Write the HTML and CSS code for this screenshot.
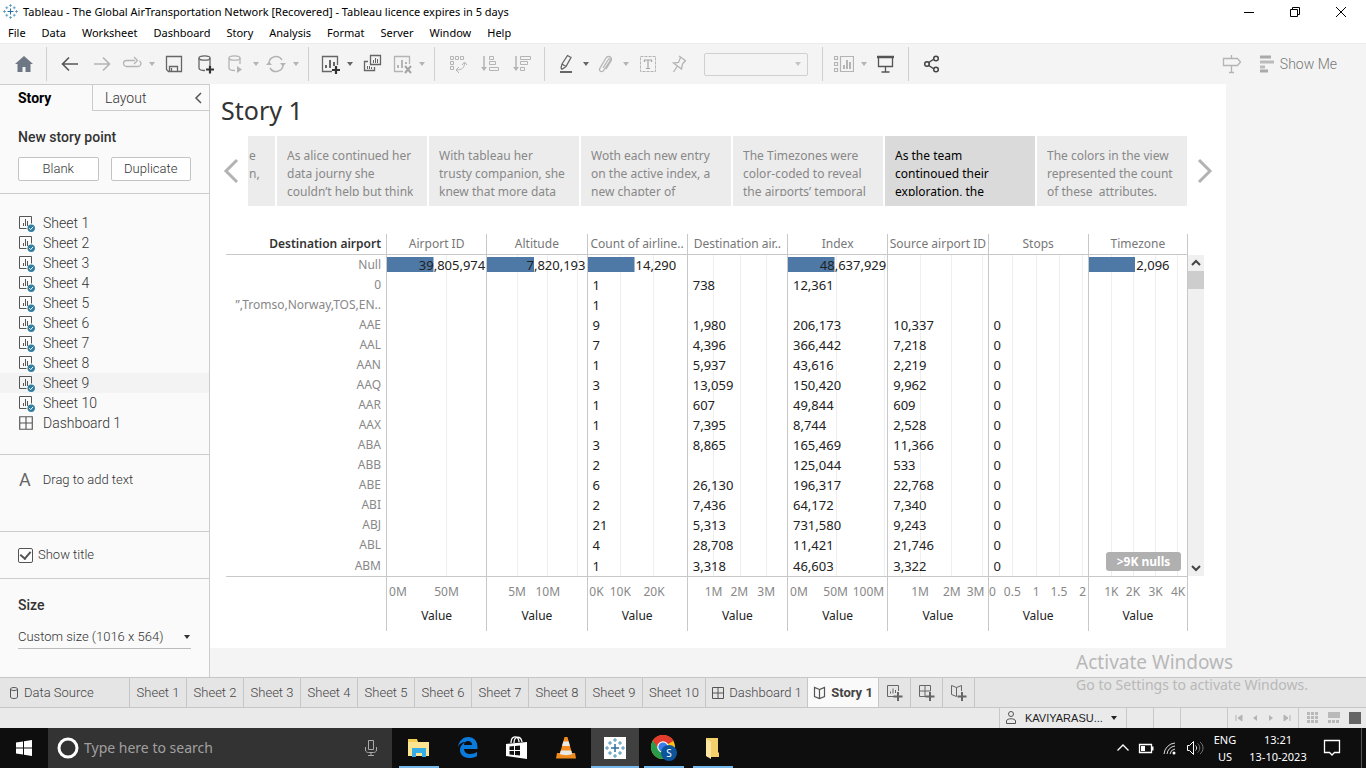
FILE: index.html
```html
<!DOCTYPE html>
<html lang="en">
<head>
<meta charset="utf-8">
<title>Tableau - The Global AirTransportation Network</title>
<link rel="stylesheet" href="styles.css">
</head>
<body>
<svg class="symbols" aria-hidden="true">
  <symbol id="caret" viewBox="0 0 8 5"><path d="M1 0h6L4 4z" fill="currentColor"/></symbol>
  <symbol id="sheet" viewBox="0 0 18 18"><path d="M9.500 14.500H2.500V2.500h12v7" fill="none" stroke="#555"/><path d="M6.500 12V9M8.500 12V5M10.500 12V7" stroke="#555"/><circle cx="14.200" cy="14.200" r="3.700" fill="#2f7d9f"/><path d="M12.300 14.200l1.400 1.400 2.400-2.800" fill="none" stroke="#fff"/></symbol>
  <symbol id="dash" viewBox="0 0 14 14"><path d="M1.500 1.500h11v11h-11zM7 1.500v11M1.500 7h11" fill="none" stroke="#555"/></symbol>
  <symbol id="book" viewBox="0 0 14 14"><path d="M6.500 3.500L1.500 1.500v9l5 2 5-2v-9zv9" fill="none" stroke="#555" stroke-width="1.200"/></symbol>
  <symbol id="logo" viewBox="0 0 20 20"><path d="M10 6v8M6 10h8" stroke="#2c6f9f" stroke-width="1.500"/><path d="M10 0v4M8 2h4M10 16v4M8 18h4M0 10h4M2 8v4M16 10h4M18 8v4M5 3v4M3 5h4M15 3v4M13 5h4M5 13v4M3 15h4M15 13v4M13 15h4" stroke="#4c91b8"/></symbol>
</svg>

<header>
  <div class="titlebar">
    <svg class="app-logo" viewBox="0 0 20 20"><use href="#logo"/></svg>
    <span class="title">Tableau - The Global AirTransportation Network [Recovered] - Tableau licence expires in 5 days</span>
    <div class="window-buttons">
      <button aria-label="Minimise"><svg width="12" height="12"><path d="M1 6.500h10" stroke="#000"/></svg></button>
      <button aria-label="Restore"><svg width="12" height="12"><path d="M1.500 3.500h7v7h-7zM3.500 3.500v-2h7v7h-2" fill="none" stroke="#000"/></svg></button>
      <button aria-label="Close"><svg width="12" height="12"><path d="M1 1l10 10M11 1L1 11" stroke="#000"/></svg></button>
    </div>
  </div>
  <nav class="menubar">
    <button>File</button><button>Data</button><button>Worksheet</button><button>Dashboard</button><button>Story</button><button>Analysis</button><button>Format</button><button>Server</button><button>Window</button><button>Help</button>
  </nav>
</header>

<div class="toolbar" role="toolbar">
  <button class="tool" aria-label="Start page"><svg width="20" height="20"><path d="M10 2l9 8h-2.500v8h-5v-5h-3v5h-5v-8H1z" fill="#6d7884"/></svg></button>
  <i class="sep"></i>
  <button class="tool" aria-label="Undo"><svg width="20" height="20"><path d="M18 10H2.500M9 3.500L2.500 10 9 16.500" fill="none" stroke="#555" stroke-width="1.600"/></svg></button>
  <button class="tool off" aria-label="Redo"><svg width="20" height="20"><path d="M2 10h15.500M11 3.500l6.500 6.500-6.500 6.500" fill="none" stroke="#b4b4b4" stroke-width="1.600"/></svg></button>
  <button class="tool drop off" aria-label="Replay"><svg width="20" height="20"><path d="M13 6.500H4.500a3 3 0 0 0 0 6h11a3 3 0 0 0 2-5.500M12 3l3.500 3.500L12 10" fill="none" stroke="#b4b4b4" stroke-width="1.300"/></svg><svg class="caret"><use href="#caret"/></svg></button>
  <button class="tool" aria-label="Save"><svg width="20" height="20"><path d="M2.500 2.500h15v15h-13l-2-2zM5.500 17v-4.500h8V17M7.500 14v3" fill="none" stroke="#666" stroke-width="1.300"/></svg></button>
  <button class="tool" aria-label="New data source"><svg width="20" height="20"><path d="M9 16.500c-3 0-6-.8-6-2.500V4M14 4v7" fill="none" stroke="#666" stroke-width="1.300"/><ellipse cx="8.500" cy="4" rx="5.500" ry="2.200" fill="none" stroke="#666" stroke-width="1.300"/><path d="M14 11.500v8M10 15.500h8" stroke="#333" stroke-width="2.200"/></svg></button>
  <button class="tool drop off" aria-label="Pause updates"><svg width="20" height="20"><path d="M9 16.500c-3 0-6-.8-6-2.500V4M14 4v6" fill="none" stroke="#b4b4b4" stroke-width="1.300"/><ellipse cx="8.500" cy="4" rx="5.500" ry="2.200" fill="none" stroke="#b4b4b4" stroke-width="1.300"/><path d="M11 12l5 3.500-5 3.500z" fill="#b4b4b4"/></svg><svg class="caret"><use href="#caret"/></svg></button>
  <button class="tool drop off" aria-label="Refresh"><svg width="20" height="20"><path d="M3 9a7 7 0 0 1 13-3M17 11a7 7 0 0 1-13 3" fill="none" stroke="#b4b4b4" stroke-width="1.500"/><path d="M0 11h6L3 7.500zM14 9h6l-3 3.500z" fill="#b4b4b4"/></svg><svg class="caret"><use href="#caret"/></svg></button>
  <i class="sep"></i>
  <button class="tool drop" aria-label="New worksheet"><svg width="20" height="20"><path d="M12 17.500H2.500v-15h15V11" fill="none" stroke="#666" stroke-width="1.300"/><path d="M6 14v-3M10 14V6M14 12V8" stroke="#666" stroke-width="2"/><path d="M16 12v8M12 16h8" stroke="#333" stroke-width="2.200"/></svg><svg class="caret"><use href="#caret"/></svg></button>
  <button class="tool" aria-label="Duplicate"><svg width="20" height="20"><path d="M8.500 1.500h10v9h-10zM6 7.500H2.500v9h10V13" fill="none" stroke="#666" stroke-width="1.300"/><path d="M11.500 9V6M13.500 9V4M15.500 9V5M5.500 15v-3M7.500 15v-3M9.500 15v-2" stroke="#666"/></svg></button>
  <button class="tool drop off" aria-label="Clear sheet"><svg width="20" height="20"><path d="M11 17.500H2.500v-15h15V10" fill="none" stroke="#b4b4b4" stroke-width="1.300"/><path d="M6 14v-3M10 14V6M14 10V8" stroke="#b4b4b4" stroke-width="2"/><path d="M13 12l6 7M19 12l-6 7" stroke="#a4a4a4" stroke-width="2"/></svg><svg class="caret"><use href="#caret"/></svg></button>
  <i class="sep"></i>
  <button class="tool off" aria-label="Swap"><svg width="20" height="20"><path d="M2.500 2.500h3v3h-3zM7.500 2.500h3v3h-3zM12.500 2.500h3v3h-3zM2.500 7.500h3v3h-3zM2.500 12.500h3v3h-3zM16.500 9c0 5-3 7-8 7M14 11l2.500-3 2.500 3M11 13l-3 3 3 3" fill="none" stroke="#b4b4b4"/></svg></button>
  <button class="tool off" aria-label="Sort ascending"><svg width="20" height="20"><path d="M4 2v13" stroke="#b4b4b4" stroke-width="1.500"/><path d="M1 13h6l-3 4z" fill="#b4b4b4"/><path d="M9.500 2.500h4v3h-4zM9.500 7.500h6v3h-6zM9.500 13.500h9v3h-9z" fill="none" stroke="#b4b4b4"/></svg></button>
  <button class="tool off" aria-label="Sort descending"><svg width="20" height="20"><path d="M4 2v13" stroke="#b4b4b4" stroke-width="1.500"/><path d="M1 13h6l-3 4z" fill="#b4b4b4"/><path d="M8.500 2.500h10v3h-10zM8.500 7.500h7v3h-7zM8.500 13.500h4v3h-4z" fill="none" stroke="#b4b4b4"/></svg></button>
  <i class="sep"></i>
  <button class="tool drop" aria-label="Highlight"><svg width="20" height="20"><path d="M6 10l5.500-8.500 3.500 2-5 9-3.500 2.500-1.500-1zM6 10l4 2.500M5 15h2" fill="none" stroke="#666" stroke-width="1.300"/><path d="M4 18h12" stroke="#666" stroke-width="2"/></svg><svg class="caret"><use href="#caret"/></svg></button>
  <button class="tool drop off" aria-label="Group"><svg width="20" height="20"><path d="M7 14l5-8c1-2 3-1 2 1l-6 9c-2 3-6 1-4-2l6-10c2-3 7-1 5 3l-5 8" fill="none" stroke="#b4b4b4" stroke-width="1.300"/></svg><svg class="caret"><use href="#caret"/></svg></button>
  <button class="tool off" aria-label="Mark labels"><svg width="20" height="20"><path d="M2.500 2.500h15v15h-15z" fill="none" stroke="#b4b4b4" stroke-dasharray="3 1"/><path d="M6.500 8V6h7v2M10 6v8M8 14.500h4" fill="none" stroke="#a4a4a4" stroke-width="1.200"/></svg></button>
  <button class="tool off" aria-label="Pin"><svg width="20" height="20"><path d="M9 2l7 5M10.500 3.500l-2 5-5 .5 8 6 1-5 3-3.500M7.500 12l-4 6" fill="none" stroke="#b4b4b4" stroke-width="1.300"/></svg></button>
  <div class="fit"><select aria-label="Fit" disabled><option></option></select><svg class="caret"><use href="#caret"/></svg></div>
  <i class="sep"></i>
  <button class="tool drop off" aria-label="Show cards"><svg width="20" height="20"><path d="M.5 2.500h3v3h-3zM.5 8.500h3v3h-3zM.5 14.500h3v3h-3zM6.500 2.500h13v15h-13z" fill="none" stroke="#b4b4b4" stroke-width="1.200"/><path d="M10 15v-4M13 15V6M16 15V8" stroke="#b4b4b4" stroke-width="2"/></svg><svg class="caret"><use href="#caret"/></svg></button>
  <button class="tool" aria-label="Presentation mode"><svg width="20" height="20"><path d="M1 3h17" stroke="#555" stroke-width="2.500"/><path d="M2.500 3v9.500h14V3M9.500 12v6M5.500 18h8" fill="none" stroke="#555" stroke-width="1.300"/></svg></button>
  <i class="sep"></i>
  <button class="tool" aria-label="Share"><svg width="20" height="20"><path d="M6 9l6-4M6 11l6 4" stroke="#444" stroke-width="1.500"/><g fill="none" stroke="#444" stroke-width="1.500"><circle cx="5" cy="10" r="2.300"/><circle cx="14" cy="4.500" r="2.300"/><circle cx="14" cy="15.500" r="2.300"/></g></svg></button>
  <div class="toolbar-end">
    <button class="tool off" aria-label="Data guide"><svg width="20" height="20"><path d="M1.500 4.500h14l3 3.500-3 3.500h-14zM9.500 1v3M9.500 12v7M7 18.500h5" fill="none" stroke="#b4b4b4" stroke-width="1.300"/></svg></button>
    <button class="show-me"><svg width="16" height="18"><path d="M1 2h11M1 16h8" stroke="#aaa" stroke-width="3"/><path d="M1 7h14M1 12h5" stroke="#bbb" stroke-width="3"/></svg>Show Me</button>
  </div>
</div>

<div class="body">
  <aside class="side">
    <div class="side-tabs"><button class="on">Story</button><button>Layout<svg width="8" height="12"><path d="M7 1L2 6l5 5" fill="none" stroke="#555" stroke-width="1.500"/></svg></button></div>
    <section class="new-point">
      <h2>New story point</h2>
      <div class="pair"><button>Blank</button><button>Duplicate</button></div>
    </section>
    <ul class="sheet-list">
      <li><svg><use href="#sheet"/></svg>Sheet 1</li>
      <li><svg><use href="#sheet"/></svg>Sheet 2</li>
      <li><svg><use href="#sheet"/></svg>Sheet 3</li>
      <li><svg><use href="#sheet"/></svg>Sheet 4</li>
      <li><svg><use href="#sheet"/></svg>Sheet 5</li>
      <li><svg><use href="#sheet"/></svg>Sheet 6</li>
      <li><svg><use href="#sheet"/></svg>Sheet 7</li>
      <li><svg><use href="#sheet"/></svg>Sheet 8</li>
      <li class="hover"><svg><use href="#sheet"/></svg>Sheet 9</li>
      <li><svg><use href="#sheet"/></svg>Sheet 10</li>
      <li><svg viewBox="-1 -1 18 18"><use href="#dash" width="16" height="16"/></svg>Dashboard 1</li>
    </ul>
    <section class="drag"><span class="letter">A</span><span>Drag to add text</span></section>
    <section class="show-title"><input type="checkbox" id="show-title" checked><label for="show-title">Show title</label></section>
    <section class="size">
      <h2><label for="size">Size</label></h2>
      <div class="select-wrap"><select id="size"><option>Custom size (1016 x 564)</option></select><svg class="caret"><use href="#caret"/></svg></div>
    </section>
  </aside>

  <main class="workspace">
    <div class="story">
      <h1>Story 1</h1>
      <div class="points">
        <button class="arrow" aria-label="Previous"><svg width="16" height="26"><path d="M14 2L3 13l11 11" fill="none" stroke="#b3b3b3" stroke-width="3"/></svg></button>
        <div class="strip">
          <button class="point cut"><span>e<br>n,</span></button>
          <button class="point"><span>As alice continued her<br>data journy she<br>couldn’t help but think</span></button>
          <button class="point"><span>With tableau her<br>trusty companion, she<br>knew that more data</span></button>
          <button class="point"><span>Woth each new entry<br>on the active index, a<br>new chapter of</span></button>
          <button class="point"><span>The Timezones were<br>color-coded to reveal<br>the airports’ temporal</span></button>
          <button class="point on"><span>As the team<br>continoued their<br>exploration, the</span></button>
          <button class="point"><span>The colors in the view<br>represented the count<br>of these&nbsp; attributes.</span></button>
        </div>
        <button class="arrow" aria-label="Next"><svg width="16" height="26"><path d="M2 2l11 11L2 24" fill="none" stroke="#b3b3b3" stroke-width="3"/></svg></button>
      </div>
      <div class="viz">
        <table>
          <colgroup><col class="first"><col><col><col><col><col><col><col><col></colgroup>
          <thead><tr><th>Destination airport</th><th>Airport ID</th><th>Altitude</th><th>Count of airline..</th><th>Destination air..</th><th>Index</th><th>Source airport ID</th><th>Stops</th><th>Timezone</th></tr></thead>
          <tbody>
            <tr><th>Null</th><td><div class="mark inside">39,805,974</div></td><td><div class="mark inside">7,820,193</div></td><td><div class="mark">14,290</div></td><td></td><td><div class="mark inside">48,637,929</div></td><td></td><td></td><td><div class="mark">2,096</div></td></tr>
            <tr><th>0</th><td></td><td></td><td>1</td><td>738</td><td>12,361</td><td></td><td></td><td></td></tr>
            <tr><th>”,Tromso,Norway,TOS,EN..</th><td></td><td></td><td>1</td><td></td><td></td><td></td><td></td><td></td></tr>
            <tr><th>AAE</th><td></td><td></td><td>9</td><td>1,980</td><td>206,173</td><td>10,337</td><td>0</td><td></td></tr>
            <tr><th>AAL</th><td></td><td></td><td>7</td><td>4,396</td><td>366,442</td><td>7,218</td><td>0</td><td></td></tr>
            <tr><th>AAN</th><td></td><td></td><td>1</td><td>5,937</td><td>43,616</td><td>2,219</td><td>0</td><td></td></tr>
            <tr><th>AAQ</th><td></td><td></td><td>3</td><td>13,059</td><td>150,420</td><td>9,962</td><td>0</td><td></td></tr>
            <tr><th>AAR</th><td></td><td></td><td>1</td><td>607</td><td>49,844</td><td>609</td><td>0</td><td></td></tr>
            <tr><th>AAX</th><td></td><td></td><td>1</td><td>7,395</td><td>8,744</td><td>2,528</td><td>0</td><td></td></tr>
            <tr><th>ABA</th><td></td><td></td><td>3</td><td>8,865</td><td>165,469</td><td>11,366</td><td>0</td><td></td></tr>
            <tr><th>ABB</th><td></td><td></td><td>2</td><td></td><td>125,044</td><td>533</td><td>0</td><td></td></tr>
            <tr><th>ABE</th><td></td><td></td><td>6</td><td>26,130</td><td>196,317</td><td>22,768</td><td>0</td><td></td></tr>
            <tr><th>ABI</th><td></td><td></td><td>2</td><td>7,436</td><td>64,172</td><td>7,340</td><td>0</td><td></td></tr>
            <tr><th>ABJ</th><td></td><td></td><td>21</td><td>5,313</td><td>731,580</td><td>9,243</td><td>0</td><td></td></tr>
            <tr><th>ABL</th><td></td><td></td><td>4</td><td>28,708</td><td>11,421</td><td>21,746</td><td>0</td><td></td></tr>
            <tr><th>ABM</th><td></td><td></td><td>1</td><td>3,318</td><td>46,603</td><td>3,322</td><td>0</td><td></td></tr>
          </tbody>
          <tfoot><tr>
            <th></th>
            <td><div class="axis"><span style="left:11%">0M</span><span style="left:60%">50M</span></div>Value</td>
            <td><div class="axis"><span style="left:30%">5M</span><span style="left:61%">10M</span></div>Value</td>
            <td><div class="axis"><span style="left:9%">0K</span><span style="left:33%">10K</span><span style="left:67%">20K</span></div>Value</td>
            <td><div class="axis"><span style="left:26%">1M</span><span style="left:52%">2M</span><span style="left:79%">3M</span></div>Value</td>
            <td><div class="axis"><span style="left:11%">0M</span><span style="left:48%">50M</span><span style="left:81%">100M</span></div>Value</td>
            <td><div class="axis"><span style="left:32%">1M</span><span style="left:64%">2M</span><span style="left:88%">3M</span></div>Value</td>
            <td><div class="axis"><span style="left:4%">0</span><span style="left:24%">0.5</span><span style="left:48%">1</span><span style="left:71%">1.5</span><span style="left:95%">2</span></div>Value</td>
            <td><div class="axis"><span style="left:23%">1K</span><span style="left:45%">2K</span><span style="left:68%">3K</span><span style="left:91%">4K</span></div>Value</td>
          </tr></tfoot>
        </table>
        <div class="scroll">
          <button aria-label="Scroll up"><svg width="10" height="10"><path d="M1 7l4-4 4 4" fill="none" stroke="#444" stroke-width="2"/></svg></button>
          <div class="thumb"></div>
          <button aria-label="Scroll down"><svg width="10" height="10"><path d="M1 3l4 4 4-4" fill="none" stroke="#444" stroke-width="2"/></svg></button>
        </div>
        <button class="nulls">&gt;9K nulls</button>
      </div>
    </div>
  </main>
</div>

<div class="sheet-tabs">
  <button class="source"><svg width="10" height="14"><path d="M1.500 3v8c0 2 7 2 7 0V3c0-2-7-2-7 0 0 2 7 2 7 0" fill="none" stroke="#555"/></svg>Data Source</button>
  <button>Sheet 1</button><button>Sheet 2</button><button>Sheet 3</button><button>Sheet 4</button><button>Sheet 5</button><button>Sheet 6</button><button>Sheet 7</button><button>Sheet 8</button><button>Sheet 9</button><button class="w10">Sheet 10</button>
  <button class="wide"><svg width="14" height="14"><use href="#dash"/></svg>Dashboard 1</button>
  <button class="on"><svg width="14" height="14"><use href="#book"/></svg>Story 1</button>
  <button class="add" aria-label="New worksheet"><svg width="18" height="18"><path d="M8 12.500H1.500v-11h11V7" fill="none" stroke="#666"/><path d="M4.500 9.500v-2M7 9.500v-5M9.500 9V6" stroke="#666"/><path d="M12 8v9M7.500 12.500h9" stroke="#666" stroke-width="2"/></svg></button>
  <button class="add" aria-label="New dashboard"><svg width="18" height="18"><path d="M8 12.500H1.500v-11h11V7M7 1.500v11M1.500 7h11" fill="none" stroke="#666"/><path d="M12 8v9M7.500 12.500h9" stroke="#666" stroke-width="2"/></svg></button>
  <button class="add" aria-label="New story"><svg width="18" height="18"><path d="M6.500 3.500l-5-2v9l5 2zl5-2V7" fill="none" stroke="#666"/><path d="M12 8v9M7.500 12.500h9" stroke="#666" stroke-width="2"/></svg></button>
</div>

<div class="status">
  <button class="user"><svg width="14" height="16"><circle cx="7" cy="4" r="2.500" fill="none" stroke="#555"/><path d="M2.500 13.500V11c0-3 9-3 9 0v2.500z" fill="none" stroke="#555"/></svg><span>KAVIYARASU...</span><svg class="caret"><use href="#caret"/></svg></button>
  <i class="blank"></i><i class="blank"></i><i class="blank long"></i>
  <div class="pager">
    <button aria-label="First"><svg width="8" height="8"><path d="M1 1v6M7 1v6L3 4z" fill="#b4b4b4" stroke="#b4b4b4"/></svg></button>
    <button aria-label="Previous sheet"><svg width="8" height="8"><path d="M6 1v6L2 4z" fill="#b4b4b4"/></svg></button>
    <button aria-label="Next sheet"><svg width="8" height="8"><path d="M2 1v6l4-3z" fill="#b4b4b4"/></svg></button>
    <button aria-label="Last"><svg width="8" height="8"><path d="M7 1v6M1 1v6l4-3z" fill="#b4b4b4" stroke="#b4b4b4"/></svg></button>
  </div>
  <div class="views">
    <button aria-label="Sheet sorter"><svg width="12" height="12"><path d="M0 1.500h12M0 5.500h12M0 9.500h12" stroke="#b9b9b9" stroke-width="3" stroke-dasharray="3 1"/></svg></button>
    <button aria-label="Filmstrip"><svg width="12" height="12"><path d="M0 3h12" stroke="#b9b9b9" stroke-width="6"/><path d="M0 9.500h12" stroke="#b9b9b9" stroke-width="3" stroke-dasharray="3 1"/></svg></button>
    <button aria-label="Tabs"><svg width="12" height="12"><path d="M0 0h12v12H0z" fill="#666"/></svg></button>
  </div>
</div>

<footer class="taskbar">
  <button class="start" aria-label="Start"><svg width="16" height="16"><path d="M0 2.500L7 1.500v6H0zM8 1.300L16 0v7.500H8zM0 8.500h7v6l-7-1zM8 8.500h8V16l-8-1.300z" fill="#fff"/></svg></button>
  <div class="search">
    <svg width="24" height="24"><circle cx="12" cy="12" r="9" fill="none" stroke="#fff" stroke-width="3"/></svg>
    <input type="text" placeholder="Type here to search" aria-label="Search">
    <svg width="14" height="18"><path d="M4.500 1.500h5v9h-5zM1.500 8v3c0 2 2 2.500 3 2.500h5c1 0 3-.5 3-2.500V8M7 13.500v3M4 16.500h6" fill="none" stroke="#aaa"/></svg>
  </div>
  <div class="apps">
    <button class="open" aria-label="File Explorer"><svg width="24" height="24"><path d="M1 4V3h9l1 3h11v14H1z" fill="#f5cf55"/><path d="M1 6h21v14H1z" fill="#fde491"/><path d="M5 12h14v9h-4v-4H9v4H5z" fill="#35aee8"/></svg></button>
    <button aria-label="Edge"><svg width="24" height="24"><path d="M2 11C3 4 8 1 12 1c6 0 10 4 9.500 12H8c0 3 3 5 6 5s5-1 7-2v4c-2 1.500-5 2-8 2-6 0-9-4-9-8 0-4 3-7 6-8-4 0-7 2-8 5zm6-2h8c0-3-2-4-4-4s-4 1.500-4 4z" fill="#0a7bdc"/></svg></button>
    <button aria-label="Store"><svg width="24" height="24"><path d="M1 8l21-2v17L1 20z" fill="#fff"/><path d="M6 7c0-8 8-8 8-1M9 7c0-8 7-7 8-1" fill="none" stroke="#fff" stroke-width="1.300"/><path d="M4.500 10.500l4.500-.5v4H4.500zM10 10l5-.5V14h-5zM4.500 15H9v4l-4.500-.5zM10 15h5v4.500l-5-.5z" fill="#111"/></svg></button>
    <button aria-label="VLC"><svg width="24" height="24"><path d="M3 17h18l1 5.500H2z" fill="#f08a1d"/><path d="M10.500 1h3l5 18c-3 2-10 2-13 0z" fill="#f28c20"/><path d="M9.300 5.500h5.400l1.200 4.500H8.100zM6.800 14.500h10.400l1 3.500c-3 1.500-9.500 1.500-12.400 0z" fill="#e9e9e9"/></svg></button>
    <button class="open active" aria-label="Tableau"><svg width="24" height="24" viewBox="-2 -2 24 24"><path d="M-1-1h22v22H-1z" fill="#fff"/><use href="#logo" width="20" height="20"/></svg></button>
    <button class="open" aria-label="Chrome"><svg width="28" height="28"><circle cx="13" cy="13" r="12" fill="#fbc116"/><path d="M13 13L2.600 7A12 12 0 0 1 23.400 7z" fill="#e33b2e"/><path d="M13 13L2.600 7A12 12 0 0 0 13 25l5-9z" fill="#2a9c49"/><path d="M13 7h10.500A12 12 0 0 0 3 6.500L8 14z" fill="#e33b2e"/><circle cx="13" cy="13" r="5.800" fill="#fff"/><circle cx="13" cy="13" r="4.600" fill="#3a7de8"/><circle cx="19" cy="19" r="8" fill="#0c549c"/><text x="19" y="23" class="badge-letter">S</text></svg></button>
    <button class="open" aria-label="Folder"><svg width="24" height="24"><path d="M5 2h12v14l1 1v4H6z" fill="#f3d06c"/><path d="M5 3l5 3v17l-5-3z" fill="#fde7a0"/></svg></button>
  </div>
  <div class="tray">
    <button aria-label="Show hidden icons"><svg width="14" height="14"><path d="M1.500 9.500L7 4l5.500 5.500" fill="none" stroke="#fff" stroke-width="1.300"/></svg></button>
    <button aria-label="Battery"><svg width="16" height="14"><path d="M1.500 3.500h12v8h-12z" fill="none" stroke="#fff" stroke-width="1.300"/><path d="M3 5h4v5H3zM14 5.500h1.500v4H14z" fill="#fff"/></svg></button>
    <button aria-label="Wi-Fi"><svg width="16" height="16"><g fill="none" stroke="#ddd"><path d="M2 14A12 12 0 0 1 13 3M5 14a9 9 0 0 1 8-8M8 14a6 6 0 0 1 5-5"/></g><circle cx="12" cy="13" r="1.500" fill="#fff"/></svg></button>
    <button aria-label="Volume"><svg width="18" height="16"><path d="M1.500 5.500h2l4-4v13l-4-4h-2z" fill="none" stroke="#fff"/><path d="M9.500 5.500c1.500 1 1.500 4 0 5" fill="none" stroke="#ddd"/><path d="M11.500 3.500c3 2 3 7 0 9M14 2c4 3 4 9 0 12" fill="none" stroke="#777"/></svg></button>
    <button class="lang">ENG<br>US</button>
    <button class="clock">13:21<br>13-10-2023</button>
    <button class="notes" aria-label="Notifications"><svg width="18" height="18"><path d="M1.500 1.500h15v12h-5L9 16l-2.500-2.500h-5z" fill="none" stroke="#fff" stroke-width="1.300"/></svg></button>
  </div>
</footer>

<div class="activate"><b>Activate Windows</b><span>Go to Settings to activate Windows.</span></div>
</body>
</html>
```
FILE: styles.css
```css
* { box-sizing: border-box; }
body {
  margin: 0; min-height: 100vh; display: flex; flex-direction: column;
  position: relative; background: #f4f4f4; color: #333;
  font: 13px/20px "Open Sans", "Noto Sans", sans-serif;
}
button, select, input { font: inherit; color: inherit; }
button { border: 0; padding: 0; background: none; display: flex; align-items: center; justify-content: center; }
svg { flex: none; display: block; }
h1, h2, ul { margin: 0; padding: 0; }
.symbols { position: absolute; width: 0; height: 0; }
.caret { width: 8px; height: 5px; }

header { background: #fff; color: #000; font-family: "Noto Sans", sans-serif; font-size: 11px; }
.titlebar { display: flex; align-items: center; height: 23px; padding: 0 2px 0 3px; gap: 5px; }
.app-logo { width: 15px; height: 15px; }
.title { flex: 1; }
.window-buttons { display: flex; }
.window-buttons button { width: 46px; height: 23px; }
.menubar { display: flex; height: 20px; padding-left: 8px; gap: 16px; }

.toolbar { display: flex; align-items: center; height: 41px; padding-left: 8px; border-top: 1px solid #ececec; background: #f4f4f4; }
.tool { width: 32px; height: 32px; color: #666; }
.tool.drop { width: 40px; justify-content: flex-start; gap: 6px; padding-left: 4px; }
.tool.off { color: #b4b4b4; }
.sep { width: 1px; height: 34px; margin: 0 7px 0 6px; background: #d0d0d0; }
.fit { display: flex; align-items: center; width: 104px; height: 23px; margin: 0 8px; padding-right: 5px; border: 1px solid #d0d0d0; border-radius: 2px; color: #c4c4c4; }
.fit select { flex: 1; appearance: none; border: 0; background: none; }
.toolbar-end { display: flex; align-items: center; margin-left: auto; padding-right: 29px; gap: 11px; }
.show-me { gap: 5px; color: #777; font-family: Roboto, sans-serif; font-size: 14px; font-weight: 300; }

.body { flex: 1; display: flex; }
.side { width: 210px; flex: none; border-right: 1px solid #ccc; border-top: 1px solid #ccc; background: #fafafa; font-family: Roboto, sans-serif; font-weight: 300; }
.side-tabs { display: flex; height: 26px; font-size: 14px; }
.side-tabs button { flex: 1; justify-content: space-between; padding: 0 7px 0 12px; border-left: 1px solid #ccc; border-bottom: 1px solid #ccc; }
.side-tabs .on { flex: 0 0 92px; padding-left: 18px; border: 0; font-weight: 700; color: #000; }
.side h2 { font-size: 14px; line-height: 20px; font-weight: 500; }
.new-point { padding: 16px 18px 12px; border-bottom: 1px solid #ccc; }
.pair { display: flex; gap: 12px; margin-top: 10px; }
.pair button { flex: 1; height: 24px; border: 1px solid #c4c4c4; border-radius: 2px; background: #fff; }
.sheet-list { list-style: none; padding: 19px 0 21px; border-bottom: 1px solid #ccc; font-size: 14px; }
.sheet-list li { display: flex; align-items: center; gap: 8px; height: 20px; padding-left: 17px; }
.sheet-list svg { width: 18px; height: 18px; }
.sheet-list .hover { background: #f3f3f3; }
.drag { display: flex; gap: 12px; padding: 15px 19px 41px; border-bottom: 1px solid #ccc; }
.letter { font-size: 18px; font-weight: 400; color: #666; }
.show-title { display: flex; align-items: center; gap: 5px; height: 47px; padding-left: 18px; border-bottom: 1px solid #ccc; }
.show-title input { appearance: none; margin: 0; width: 15px; height: 15px; border: 1px solid #555; border-radius: 2px; display: grid; place-items: center; background: #fff; }
.show-title input:checked::after { content: ""; width: 5px; height: 8px; margin-bottom: 2px; border: solid #555; border-width: 0 2px 2px 0; transform: rotate(40deg); }
.size { padding: 16px 18px; }
.select-wrap { display: flex; align-items: center; margin-top: 11px; height: 23px; border-bottom: 1px solid #bbb; }
.select-wrap select { flex: 1; appearance: none; border: 0; background: none; padding: 0; }

.workspace { flex: 1; min-width: 0; padding: 0 140px 29px 0; }
.story { height: 100%; padding: 11px 22px 16px 16px; background: #fff; font-family: "Noto Sans", sans-serif; }
.story h1 { margin-left: -5px; font-size: 25px; line-height: 30px; font-weight: 400; }
.points { display: flex; align-items: center; margin: 11px -9px 28px -3px; }
.arrow { width: 16px; }
.strip { flex: 1; display: flex; gap: 2px; margin: 0 10px 0 9px; min-width: 0; }
.point { flex: 1; min-width: 0; height: 70px; padding: 11px 0 10px 10px; align-items: flex-start; justify-content: flex-start; background: #ececec; color: #888; font-size: 12px; line-height: 18px; text-align: left; }
.point span { display: block; height: 49px; overflow: hidden; white-space: nowrap; }
.point.cut { flex: 0 0 27px; padding-left: 1px; }
.point.on { background: #dadada; color: #000; }

.viz { display: flex; position: relative; font-size: 12px; }
table { flex: 1; width: 100%; table-layout: fixed; border-collapse: separate; border-spacing: 0; }
col.first { width: 160px; }
th, td { height: 20px; padding: 0 0 0 5px; line-height: 20px; white-space: nowrap; text-align: left; font-weight: 400; border-left: 1px solid #c8c8c8; color: #222; }
tr > :last-child { border-right: 1px solid #c8c8c8; }
tr > :first-child { border-left: 0; padding: 0 5px 0 0; text-align: right; }
thead th { height: 21px; padding: 0; text-align: center; color: #777; border-bottom: 1px solid #c8c8c8; }
thead th:first-child { font-weight: 600; color: #333; }
tbody th { color: #888; }
tbody td { font-size: 13px; --g: linear-gradient(#eee, #eee); background-repeat: no-repeat; background-size: 1px 100%; }
tbody tr:last-child > * { height: 21px; }
tbody td:nth-child(2) { background-image: var(--g); background-position: 60% 0; }
tbody td:nth-child(3) { background-image: var(--g), var(--g), var(--g); background-position: 30% 0, 61% 0, 91% 0; }
tbody td:nth-child(4) { background-image: var(--g), var(--g); background-position: 33% 0, 67% 0; }
tbody td:nth-child(5) { background-image: var(--g), var(--g), var(--g); background-position: 26% 0, 53% 0, 80% 0; }
tbody td:nth-child(6) { background-image: var(--g), var(--g); background-position: 49% 0, 98% 0; }
tbody td:nth-child(7) { background-image: var(--g), var(--g), var(--g); background-position: 32% 0, 64% 0, 95% 0; }
tbody td:nth-child(8) { background-image: var(--g), var(--g), var(--g), var(--g); background-position: 24% 0, 48% 0, 72% 0, 95% 0; }
tbody td:nth-child(9) { background-image: var(--g), var(--g), var(--g), var(--g); background-position: 23% 0, 45% 0, 68% 0, 91% 0; }
.mark { height: 20px; margin-left: -5px; padding-left: 51%; background: linear-gradient(#4e79a7, #4e79a7) 0 2px / 47% 15px no-repeat; }
.mark.inside { padding: 0 1px 0 0; text-align: right; }
tfoot th, tfoot td { height: 55px; padding: 0; text-align: center; vertical-align: top; border-top: 1px solid #c8c8c8; }
.axis { position: relative; height: 29px; color: #888; }
.axis span { position: absolute; top: 5px; transform: translateX(-50%); }
.scroll { width: 16px; flex: none; margin: 21px 0 55px; display: flex; flex-direction: column; background: #f0f0f0; }
.scroll button { height: 16px; }
.thumb { height: 18px; margin-bottom: auto; background: #cdcdcd; }
.nulls { position: absolute; right: 23px; bottom: 60px; width: 75px; height: 19px; border-radius: 3px; background: #b0b0b0; color: #fff; font-weight: 700; }

.sheet-tabs { display: flex; height: 31px; border: solid #c6c6c6; border-width: 1px 0; background: #e5e5e5; color: #444; font-family: Roboto, sans-serif; font-weight: 300; }
.sheet-tabs button { width: 57px; border-right: 1px solid #c6c6c6; gap: 4px; }
.sheet-tabs .source { width: 130px; justify-content: flex-start; padding-left: 9px; gap: 5px; }
.sheet-tabs .w10 { width: 63px; }
.sheet-tabs .wide { width: 102px; }
.sheet-tabs .on { width: 71px; background: #fafafa; font-weight: 700; color: #444; }
.sheet-tabs .add { width: 32px; }

.status { display: flex; justify-content: flex-end; height: 20px; background: #eaeaea; }
.status > * { border-left: 1px solid #c8c8c8; }
.user { width: 127px; justify-content: flex-start; padding-left: 4px; gap: 7px; font: 11px "Liberation Sans", Arial, sans-serif; color: #222; }
.blank { width: 27px; }
.blank.long { width: 47px; }
.pager { display: flex; align-items: center; width: 71px; padding-left: 7px; gap: 8px; }
.views { display: flex; align-items: center; width: 68px; padding-left: 8px; gap: 9px; }

.taskbar { display: flex; height: 40px; background: #0e0e0f; color: #fff; font-family: "Noto Sans", sans-serif; }
.start { width: 48px; }
.search { display: flex; align-items: center; width: 344px; padding: 0 14px 0 8px; gap: 4px; background: #333; }
.search input { flex: 1; min-width: 0; border: 0; padding: 0; background: none; font-size: 14px; }
.search input::placeholder { color: #a0a0a0; opacity: 1; }
.apps { display: flex; gap: 1px; margin-left: 3px; }
.apps button { width: 48px; height: 40px; }
.apps .open { background: linear-gradient(#76b9ed, #76b9ed) 50% 100% / 40px 2px no-repeat; }
.apps .active { background: linear-gradient(#76b9ed, #76b9ed) 50% 100% / 48px 2px no-repeat #404040; }
.badge-letter { font: 10px "Noto Sans", sans-serif; fill: #fff; text-anchor: middle; }
.tray { display: flex; align-items: center; margin-left: auto; padding-right: 4px; gap: 8px; font-size: 11px; }
.tray button { height: 40px; line-height: 17px; text-align: center; }
.lang { width: 26px; }
.clock { width: 64px; }
.notes { width: 40px; padding-right: 19px; margin-left: 4px; border-right: 1px solid #555; }

.activate { position: absolute; right: 58px; bottom: 73px; display: flex; flex-direction: column; color: #b8b8b8; font: 14px/20px "Noto Sans", sans-serif; pointer-events: none; }
.activate b { font-weight: 400; font-size: 19px; line-height: 26px; }
```
